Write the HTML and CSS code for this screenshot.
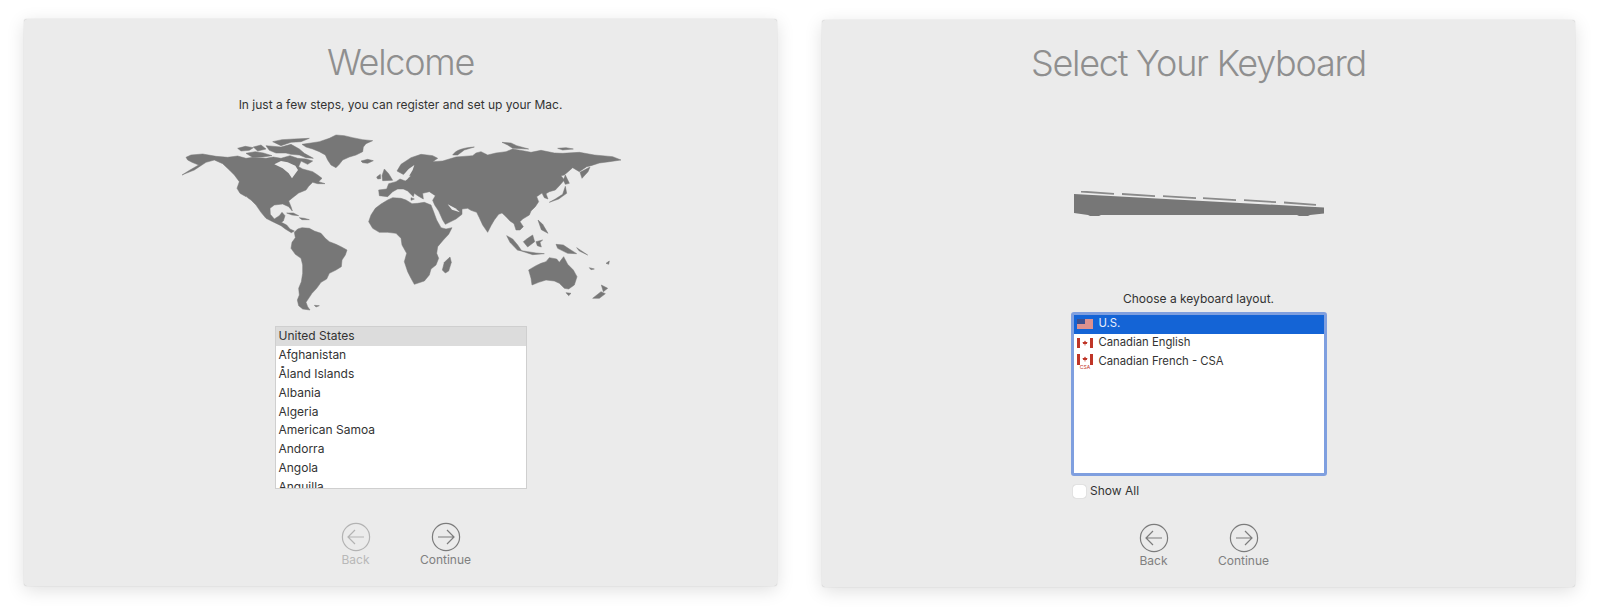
FILE: index.html
```html
<!DOCTYPE html>
<html lang="en">
<head>
    <meta charset="UTF-8">
    <meta name="viewport" content="width=device-width, initial-scale=1.0">
    <title>Mac Setup Assistant</title>
    <link rel="stylesheet" href="styles.css">
</head>
<body>
    <!-- Welcome step -->
    <section class="panel panel-welcome">
        <h1>Welcome</h1>
        <p class="intro">In just a few steps, you can register and set up your Mac.</p>

        <svg class="world-map" viewBox="0 0 1410 585" aria-hidden="true">
            <!-- North America -->
            <path d="M60,97 L75,90 L110,87 L150,94 L185,97 L215,93 L240,100 L262,97 L300,100 L322,96 L345,100 L372,92 L395,100 L420,102 L440,108 L425,118 L405,108 L398,125 L410,132 L440,140 L455,150 L468,160 L458,170 L477,176 L455,176 L440,172 L428,184 L420,195 L398,204 L380,218 L368,228 L375,245 L379,258 L368,245 L350,237 L325,240 L312,250 L313,268 L325,282 L340,272 L348,262 L357,272 L352,288 L346,292 L362,300 L372,312 L385,318 L376,323 L358,312 L345,302 L320,290 L300,280 L285,262 L270,240 L255,225 L240,215 L222,205 L213,190 L220,170 L205,150 L190,135 L170,116 L145,105 L120,112 L100,125 L85,135 L60,145 L48,150 L72,135 L98,120 L78,112 L65,105 Z"/>
            <path class="cut" d="M325,118 L345,108 L365,112 L388,122 L396,135 L385,150 L378,160 L368,145 L350,130 Z"/>
            <path class="cut" d="M240,214 L256,232 L274,266 L262,256 L245,232 Z"/>
            <!-- Arctic islands -->
            <path d="M215,70 L238,64 L262,68 L250,76 L225,78 Z"/>
            <path d="M240,85 L268,80 L292,84 L318,92 L290,96 L258,96 Z"/>
            <path d="M262,66 L285,60 L300,72 L275,78 Z"/>
            <path d="M320,50 L348,44 L385,42 L430,40 L405,50 L375,52 L345,62 Z"/>
            <path d="M300,62 L345,66 L375,58 L400,72 L415,85 L442,100 L420,98 L400,90 L375,88 L360,84 L330,84 L310,76 Z"/>
            <!-- Greenland, Iceland -->
            <path d="M408,58 L435,54 L460,50 L490,40 L510,30 L535,32 L560,38 L590,44 L620,47 L600,56 L592,66 L590,80 L570,90 L550,96 L530,105 L520,118 L510,128 L495,120 L485,105 L478,90 L460,80 L440,72 L420,66 Z"/>
            <path d="M585,108 L605,103 L622,107 L605,115 L590,113 Z"/>
            <!-- Caribbean -->
            <path d="M362,264 L382,264 L398,272 L378,270 Z"/>
            <path d="M400,278 L415,280 L430,284 L408,284 Z"/>
            <!-- South America -->
            <path d="M385,322 L395,312 L408,308 L430,310 L445,318 L465,325 L478,340 L490,350 L510,358 L525,365 L543,375 L538,390 L528,405 L526,425 L510,435 L490,445 L482,462 L465,472 L452,490 L438,505 L428,520 L420,532 L425,545 L432,555 L410,552 L398,542 L394,525 L400,510 L398,490 L406,470 L410,445 L410,420 L405,400 L388,388 L375,370 L378,352 L388,338 Z"/>
            <path d="M445,541 L460,542 L450,546 Z"/>
            <!-- Africa, Madagascar -->
            <path d="M608,290 L615,270 L628,250 L645,237 L665,225 L680,218 L705,220 L720,225 L738,236 L755,235 L775,232 L795,240 L802,258 L812,285 L825,308 L840,312 L858,308 L848,328 L832,345 L815,365 L812,385 L818,400 L810,420 L795,432 L790,450 L775,468 L745,478 L735,460 L725,440 L715,410 L722,385 L708,360 L705,340 L690,325 L665,322 L640,322 L620,310 Z"/>
            <path d="M852,396 L856,412 L848,438 L838,444 L829,435 L835,412 Z"/>
            <!-- Eurasia -->
            <path d="M638,195 L662,192 L668,176 L690,170 L702,162 L718,168 L735,152 L715,150 L693,138 L705,118 L735,98 L765,88 L800,92 L815,100 L800,110 L830,108 L870,96 L920,92 L930,84 L945,80 L965,90 L990,84 L1020,80 L1040,72 L1075,78 L1095,82 L1125,76 L1165,84 L1190,85 L1240,82 L1285,90 L1340,95 L1365,105 L1330,110 L1300,114 L1275,122 L1262,125 L1240,140 L1220,128 L1195,150 L1185,152 L1195,165 L1182,180 L1168,195 L1150,200 L1140,206 L1146,222 L1135,218 L1128,204 L1112,215 L1118,230 L1108,245 L1095,258 L1090,270 L1070,282 L1062,290 L1072,305 L1062,315 L1050,315 L1044,296 L1032,288 L1020,275 L1008,264 L998,268 L985,285 L975,302 L965,322 L950,300 L940,278 L932,262 L915,256 L905,250 L888,252 L888,268 L870,282 L838,298 L830,285 L818,258 L806,240 L800,226 L808,212 L790,200 L770,205 L772,222 L755,212 L745,205 L742,215 L725,198 L712,192 L695,192 L680,200 L665,215 L640,212 Z"/>
            <path class="cut" d="M712,150 L728,132 L745,120 L740,135 L730,152 L722,165 Z"/>
            <path class="cut" d="M845,238 L868,250 L882,262 L858,254 Z"/>
            <path d="M1272,126 L1266,140 L1248,160 L1242,142 Z"/>
            <!-- Britain, Ireland -->
            <path d="M648,152 L655,132 L668,146 L680,166 L650,167 Z"/>
            <path d="M632,156 L643,148 L644,161 L635,162 Z"/>
            <!-- Sicily -->
            <path d="M735,218 L745,222 L735,226 Z"/>
            <!-- Arctic Russia -->
            <path d="M860,90 C870,74 895,68 925,66 L895,75 L875,90 Z"/>
            <path d="M1008,52 L1035,54 L1052,62 L1088,72 L1040,70 L1025,60 Z"/>
            <path d="M1175,70 L1200,68 L1222,72 L1190,75 Z"/>
            <!-- Japan, Sakhalin -->
            <path d="M1150,232 L1168,222 L1190,208 L1198,184 L1202,205 L1178,222 Z"/>
            <path d="M1192,165 L1198,150 L1210,175 L1198,178 Z"/>
            <!-- Indonesia, Philippines -->
            <path d="M1022,332 L1040,342 L1055,360 L1066,376 L1055,376 L1032,352 Z"/>
            <path d="M1060,376 L1085,380 L1110,384 L1135,386 L1100,389 Z"/>
            <path d="M1072,350 L1085,340 L1100,330 L1106,350 L1085,366 Z"/>
            <path d="M1110,350 L1130,345 L1122,352 L1126,366 L1114,362 Z"/>
            <path d="M1116,285 L1130,298 L1146,325 L1126,314 Z"/>
            <path d="M1170,358 L1192,360 L1210,372 L1232,386 L1205,385 L1175,370 Z"/>
            <path d="M1232,368 L1265,390 L1240,378 Z"/>
            <!-- Australia, New Zealand -->
            <path d="M1088,435 L1110,422 L1125,415 L1140,410 L1150,398 L1172,402 L1180,412 L1193,395 L1205,418 L1222,435 L1233,455 L1225,480 L1208,492 L1195,490 L1180,475 L1165,468 L1140,465 L1118,472 L1098,480 L1095,460 Z"/>
            <path d="M1200,503 L1215,505 L1208,512 Z"/>
            <path d="M1280,520 L1305,500 L1318,506 L1300,520 Z"/>
            <path d="M1306,480 L1325,490 L1312,500 Z"/>
            <path d="M1270,428 L1285,432 L1275,434 Z"/>
            <path d="M1320,415 L1330,408 L1328,418 Z"/>
        </svg>

        <div class="list list-country">
            <div class="row row-current">United States</div>
            <div class="row">Afghanistan</div>
            <div class="row">Åland Islands</div>
            <div class="row">Albania</div>
            <div class="row">Algeria</div>
            <div class="row">American Samoa</div>
            <div class="row">Andorra</div>
            <div class="row">Angola</div>
            <div class="row">Anguilla</div>
        </div>

        <nav class="nav nav-welcome">
            <div class="nav-btn disabled">
                <svg viewBox="0 0 30 30"><circle cx="15" cy="15" r="13.6"/><path d="M23,15 H7 M14,8 L7,15 L14,22"/></svg>
                <span>Back</span>
            </div>
            <div class="nav-btn">
                <svg viewBox="0 0 30 30"><circle cx="15" cy="15" r="13.6"/><path d="M7,15 H23 M16,8 L23,15 L16,22"/></svg>
                <span>Continue</span>
            </div>
        </nav>
    </section>

    <!-- Keyboard step -->
    <section class="panel panel-keyboard">
        <h1>Select Your Keyboard</h1>

        <svg class="keyboard" viewBox="0 0 252 30" aria-hidden="true">
            <path d="M1,3 L251,16.5 L251,22.5 L237,24 L235,25 L226,25 L224,24 L28,24 L26,25 L17,25 L15,24 L1,22 Z"/>
            <path d="M8,0.5 L41,2.8 M49,3 L82,5.2 M90,5.2 L123,7.2 M130,7.2 L163,9.2 M171,9.2 L203,11.2 M211,11.5 L243,13.9" class="keys"/>
        </svg>

        <p class="choose">Choose a keyboard layout.</p>

        <div class="list list-layout">
            <div class="row row-selected">
                <svg class="flag" viewBox="0 0 16 14">
                    <rect y="2" width="16" height="10" fill="#f2dede"/>
                    <path d="M0,3 H16 M0,5 H16 M0,7 H16 M0,9 H16 M0,11 H16" stroke="#c9443f" stroke-width="1"/>
                    <rect y="2" width="8" height="5" fill="#3c4f8f"/>
                </svg>
                <span>U.S.</span>
            </div>
            <div class="row">
                <svg class="flag" viewBox="0 0 16 14">
                    <rect y="2" width="16" height="10" fill="#fff"/>
                    <rect y="2" width="3" height="10" fill="#bf3527"/>
                    <rect x="13" y="2" width="3" height="10" fill="#bf3527"/>
                    <path d="M8,4.5 L9,6 L10.5,6 L9.8,8 L8.4,8 L8.4,9.5 L7.6,9.5 L7.6,8 L6.2,8 L5.5,6 L7,6 Z" fill="#bf3527"/>
                </svg>
                <span>Canadian English</span>
            </div>
            <div class="row">
                <svg class="flag flag-csa" viewBox="0 0 16 18">
                    <rect y="0" width="16" height="11" fill="#fff"/>
                    <rect y="0" width="3" height="11" fill="#bf3527"/>
                    <rect x="13" y="0" width="3" height="11" fill="#bf3527"/>
                    <path d="M8,2.5 L9,4 L10.5,4 L9.8,6 L8.4,6 L8.4,7.5 L7.6,7.5 L7.6,6 L6.2,6 L5.5,4 L7,4 Z" fill="#bf3527"/>
                    <text x="8" y="15" text-anchor="middle" class="flag-label">CSA</text>
                </svg>
                <span>Canadian French - CSA</span>
            </div>
        </div>

        <label class="show-all"><span class="checkbox"></span>Show All</label>

        <nav class="nav nav-keyboard">
            <div class="nav-btn">
                <svg viewBox="0 0 30 30"><circle cx="15" cy="15" r="13.6"/><path d="M23,15 H7 M14,8 L7,15 L14,22"/></svg>
                <span>Back</span>
            </div>
            <div class="nav-btn">
                <svg viewBox="0 0 30 30"><circle cx="15" cy="15" r="13.6"/><path d="M7,15 H23 M16,8 L23,15 L16,22"/></svg>
                <span>Continue</span>
            </div>
        </nav>
    </section>
</body>
</html>
```

FILE: styles.css
```css
body {
    font-family: Inter, "Liberation Sans", sans-serif;
    margin: 0;
    padding: 19px 25px 0 24px;
    background: #fff;
    display: flex;
    align-items: flex-start;
    gap: 45px;
    height: 614px;
    box-sizing: border-box;
    overflow: hidden;
}

.panel {
    width: 753px;
    height: 567px;
    box-sizing: border-box;
    background: #ebebeb;
    border-radius: 3px;
    box-shadow: 0 0 1px rgba(0, 0, 0, 0.3), 0 4px 18px rgba(0, 0, 0, 0.13);
    display: flex;
    flex-direction: column;
    align-items: center;
    flex-shrink: 0;
    color: #333;
}

.panel-keyboard {
    margin-top: 1px;
}

h1 {
    font-size: 36px;
    font-weight: 300;
    letter-spacing: -1.25px;
    line-height: 44px;
    color: #8f8f8f;
    margin: 21px 0 0;
}

.intro {
    font-size: 12px;
    line-height: 16px;
    margin: 13px 0 0;
}

.world-map {
    width: 470px;
    height: 195px;
    margin-top: 12px;
    fill: #777;
    stroke: #777;
    stroke-width: 1.5;
    stroke-linejoin: round;
    filter: blur(0.4px);
}

.world-map .cut {
    fill: #ebebeb;
    stroke: none;
}

.list {
    background: #fff;
    overflow: hidden;
    font-size: 12px;
    box-sizing: border-box;
}

.list-country {
    width: 252px;
    height: 163px;
    margin-top: 6px;
    border: 1px solid #cfcfcf;
}

.list-layout {
    width: 256px;
    height: 164px;
    margin-top: 5px;
    border: 3px solid #7f9fdf;
    border-radius: 3px;
    font-size: 11.3px;
}

.row {
    height: 18.9px;
    line-height: 18.9px;
    padding-left: 3px;
    white-space: nowrap;
    display: flex;
    align-items: center;
}

.row-current {
    background: #dcdcdc;
}

.row-selected {
    background: #1464d6;
    color: #e8eefc;
}

.list-layout .row {
    padding-left: 3px;
    gap: 6px;
}

.list-layout .row span {
    margin-bottom: 2px;
}

.flag {
    width: 16px;
    height: 14px;
    flex-shrink: 0;
}

.flag-csa {
    height: 18px;
    margin-top: 2px;
    margin-bottom: 0;
    overflow: visible;
}

.flag-label {
    font-size: 5px;
    fill: #bf3527;
}

.keyboard {
    width: 252px;
    height: 30px;
    margin-top: 106px;
    fill: #777;
}

.keyboard .keys {
    fill: none;
    stroke: #8a8a8a;
    stroke-width: 1.8;
}

.choose {
    font-size: 12px;
    line-height: 16px;
    margin: 70px 0 0;
}

.show-all {
    align-self: flex-start;
    margin: 8px 0 0 251px;
    font-size: 12px;
    line-height: 14px;
    display: flex;
    align-items: center;
    gap: 4px;
}

.checkbox {
    width: 13px;
    height: 13px;
    background: #fff;
    border-radius: 3px;
    box-shadow: 0 0 1px rgba(0, 0, 0, 0.35);
}

.nav {
    display: flex;
}

.nav-welcome {
    margin-top: 33px;
}

.nav-keyboard {
    margin-top: 25px;
}

.nav-btn {
    width: 90px;
    display: flex;
    flex-direction: column;
    align-items: center;
    color: #808080;
    font-size: 12px;
}

.nav-btn svg {
    width: 30px;
    height: 30px;
    fill: none;
    stroke: #7c7c7c;
    stroke-width: 1.2;
}

.nav-btn span {
    line-height: 16px;
}

.nav-btn.disabled {
    color: #b8b8b8;
}

.nav-btn.disabled svg {
    stroke: #b3b3b3;
}
```
